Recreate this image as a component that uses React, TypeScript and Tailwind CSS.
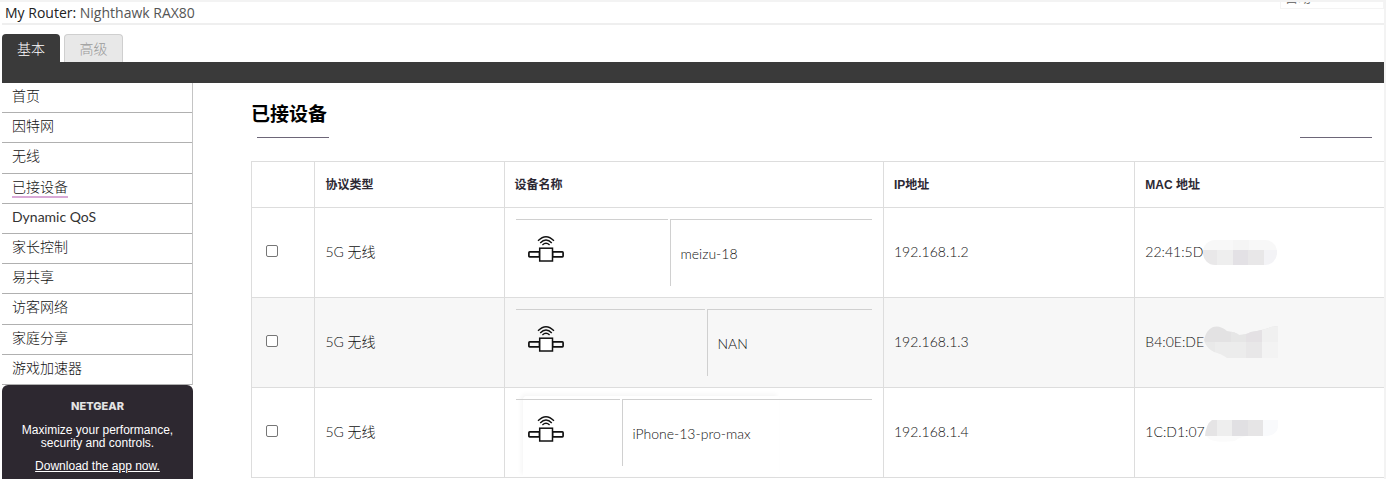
import React from "react";

const navItems: string[] = [
  "首页",
  "因特网",
  "无线",
  "已接设备",
  "Dynamic QoS",
  "家长控制",
  "易共享",
  "访客网络",
  "家庭分享",
  "游戏加速器",
];

type MaskShape = "pill" | "wave" | "flat";

interface Device {
  protocol: string;
  name: string;
  iconCell: string;
  ip: string;
  mac: string;
  mask: MaskShape;
  raised?: boolean;
}

const devices: Device[] = [
  { protocol: "5G 无线", name: "meizu-18", iconCell: "w-[152px]", ip: "192.168.1.2", mac: "22:41:5D", mask: "pill" },
  { protocol: "5G 无线", name: "NAN", iconCell: "w-[189px]", ip: "192.168.1.3", mac: "B4:0E:DE", mask: "wave" },
  {
    protocol: "5G 无线",
    name: "iPhone-13-pro-max",
    iconCell: "w-[104px]",
    ip: "192.168.1.4",
    mac: "1C:D1:07",
    mask: "flat",
    raised: true,
  },
];

function DeviceIcon() {
  return (
    <svg width="36" height="28" viewBox="0 0 36 28" fill="none" stroke="#111" aria-hidden="true">
      <path d="M10 4.8 Q18 -3.2 26 4.8" strokeWidth="1.3" />
      <path d="M12.2 7 Q18 1 23.8 7" strokeWidth="1.3" />
      <path d="M14.4 9 Q18 5.6 21.6 9" strokeWidth="1.3" />
      <rect x="0.9" y="15.9" width="10.6" height="5" rx="0.8" strokeWidth="1.7" />
      <rect x="24.5" y="15.9" width="10.6" height="5" rx="0.8" strokeWidth="1.7" />
      <rect x="11.7" y="12.2" width="12.8" height="12.8" fill="#fff" strokeWidth="1.5" />
    </svg>
  );
}

function Mask({ shape }: { shape: MaskShape }) {
  if (shape === "pill") {
    return (
      <svg width="74" height="32" viewBox="0 0 74 32" aria-hidden="true">
        <clipPath id="mask-pill">
          <rect x="0" y="4" width="74" height="25" rx="12" />
        </clipPath>
        <g clipPath="url(#mask-pill)">
          <rect width="74" height="14" fill="#f8f8f8" />
          <rect x="30" width="16" height="14" fill="#f5f5f5" />
          <rect y="14" width="14" height="16" fill="#e9e8e9" />
          <rect x="14" y="14" width="16" height="16" fill="#eeeeee" />
          <rect x="30" y="14" width="15" height="16" fill="#e3e1e5" />
          <rect x="45" y="14" width="16" height="16" fill="#e8e7e8" />
          <rect x="61" y="14" width="14" height="16" fill="#f3f3f6" />
        </g>
      </svg>
    );
  }
  if (shape === "wave") {
    return (
      <svg width="74" height="32" viewBox="0 0 74 32" aria-hidden="true">
        <clipPath id="mask-wave">
          <path d="M0 14 Q2 4 9 1 Q16 -1 23 5 Q32 6 35 9 Q42 9 47 6 Q60 4 67 1 L74 0 V32 H23 Q18 28 10 26 Q2 22 0 14Z" />
        </clipPath>
        <g clipPath="url(#mask-wave)">
          <rect width="74" height="16" fill="#e3e2e3" />
          <rect x="27" width="15" height="16" fill="#e6e6e6" />
          <rect x="42" width="16" height="16" fill="#e4e1e4" />
          <rect x="58" width="16" height="16" fill="#f0f0f0" />
          <rect y="16" width="11" height="16" fill="#e9e9e9" />
          <rect x="11" y="16" width="31" height="16" fill="#ececec" />
          <rect x="42" y="16" width="16" height="16" fill="#e8e7e8" />
          <rect x="58" y="16" width="16" height="16" fill="#f3f3f3" />
        </g>
      </svg>
    );
  }
  return (
    <svg width="74" height="26" viewBox="0 0 74 26" aria-hidden="true">
      <path d="M1 17 H42 Q34 18 30 22 Q14 24 6 21Z" fill="#fbfbfb" />
      <path d="M0 17 Q1 5 7 1 H12 V17Z" fill="#e5e4e5" />
      <rect x="12" y="1" width="15" height="16" fill="#eeeeee" />
      <rect x="27" y="1" width="16" height="16" fill="#e1e0e3" />
      <rect x="43" y="1" width="15" height="16" fill="#e6e5e6" />
      <path d="M58 1 H73 V8 Q72 16 62 17 H58Z" fill="#f9fafc" />
    </svg>
  );
}

function Header() {
  return (
    <header className="flex h-[23px] items-center justify-between overflow-hidden border-b-2 border-[#efefef]">
      <p className="pl-[3px] font-['Open_Sans','Noto_Sans',sans-serif] text-[14px] leading-5 text-[#555]">
        <span className="text-[#222]">My Router:</span> Nighthawk RAX80
      </p>
      <select
        aria-label="语言"
        className="mb-8 h-6 w-[104px] shrink-0 appearance-none border border-[#f4f4f4] bg-white px-1 text-[13px] leading-5 text-[#777]"
      >
        <option>自动</option>
      </select>
    </header>
  );
}

function Tabs() {
  return (
    <div className="pt-[9px]">
      <div className="flex gap-1">
        <button className="h-7 w-[58px] rounded-t bg-[#3a3a3a] text-[14px] font-light text-white">基本</button>
        <button className="h-7 w-[59px] rounded-t border border-b-0 border-[#cfcfcf] bg-[#e8e8e8] text-[14px] font-light text-[#999]">
          高级
        </button>
      </div>
      <div className="h-[21px] bg-[#3a3a3a]" />
    </div>
  );
}

function Sidebar() {
  return (
    <aside className="flex w-[191px] shrink-0 flex-col">
      <nav className="border-r border-[#c4c4c4]">
        <ul className="grid h-[302px] auto-rows-fr">
          {navItems.map((item) => (
            <li key={item} className="flex items-center border-b border-[#b0b0b0] pb-[3px] pl-2.5">
              <a
                href="#"
                className={
                  item === "已接设备"
                    ? "border-b-2 border-[#d9a9d6] pt-0.5 text-[14px] leading-[18px] font-light text-[#111]"
                    : item === "Dynamic QoS"
                      ? "text-[14px] leading-5 text-[#333]"
                      : "text-[14px] leading-5 font-light text-[#111]"
                }
              >
                {item}
              </a>
            </li>
          ))}
        </ul>
      </nav>
      <div className="grow rounded-t-md bg-[#2d2830] px-2 pt-[15px] text-center font-['Liberation_Sans',Arial,sans-serif] text-[12px] leading-[13px] text-white">
        <p className="font-[Inter,sans-serif] text-[11px] leading-3 font-extrabold text-[#e4e4e4]">NETGEAR</p>
        <p className="pt-3">
          Maximize your performance,
          <br />
          security and controls.
        </p>
        <p className="pt-2.5">
          <a href="#" className="underline">
            Download the app now.
          </a>
        </p>
      </div>
    </aside>
  );
}

function DeviceTable() {
  const head = "border border-[#dddddd] px-2.5 text-left text-[12px] font-bold text-[#2c2833]";
  const cell = "border border-[#dddddd] px-2.5 pb-0.5 text-[14px] font-light text-[#111]";
  return (
    <table className="w-full table-fixed border-collapse">
      <thead>
        <tr className="h-[46px]">
          <th className={head + " w-[5.6%]"} aria-label="选择" />
          <th className={head + " w-[16.7%]"}>协议类型</th>
          <th className={head + " w-[33.5%]"}>设备名称</th>
          <th className={head + " w-[22.2%] font-['Liberation_Sans','Noto_Sans_CJK_SC',sans-serif]"}>IP地址</th>
          <th className={head + " border-r-0 font-['Liberation_Sans','Noto_Sans_CJK_SC',sans-serif]"}>MAC 地址</th>
        </tr>
      </thead>
      <tbody>
        {devices.map((device) => (
          <tr key={device.name} className="h-[90px] even:bg-[#f7f7f7]">
            <td className="border border-[#dddddd] pb-1 pl-3.5">
              <input
                type="checkbox"
                aria-label={device.name}
                className="block size-3 appearance-none rounded-xs border border-[#767676] bg-white"
              />
            </td>
            <td className={cell}>{device.protocol}</td>
            <td className="relative border border-[#dddddd] px-[11px] text-[14px] font-light text-[#111]">
              {device.raised && (
                <div className="absolute top-2 left-[18px] h-20 w-64 rounded-tl shadow-[-2px_-2px_4px_rgba(0,0,0,0.04)]" />
              )}
              <div className="relative flex h-[67px] gap-0.5">
                <div className={"shrink-0 border-t border-[#d0d0d0] pt-4 pl-3 " + device.iconCell}>
                  <DeviceIcon />
                </div>
                <div className="flex grow items-center border-t border-l border-[#d0d0d0] pl-2.5">{device.name}</div>
              </div>
            </td>
            <td className={cell}>{device.ip}</td>
            <td className="border border-r-0 border-[#dddddd] pb-0.5 pl-2.5 text-[14px] font-light text-[#111]">
              <div className="flex items-center">
                <span>{device.mac}</span>
                <Mask shape={device.mask} />
              </div>
            </td>
          </tr>
        ))}
      </tbody>
    </table>
  );
}

export default function App() {
  return (
    <div className="flex min-h-screen flex-col border-t-2 border-r-2 border-[#f3f3f3] bg-white pl-0.5 font-[Lato,'Noto_Sans_CJK_SC',sans-serif]">
      <Header />
      <Tabs />
      <div className="flex grow">
        <Sidebar />
        <main className="min-w-0 grow pl-[58px]">
          <h1 className="pt-[15px] text-[19px] leading-8 font-bold text-black">已接设备</h1>
          <div className="flex justify-between pt-[7px] pr-3 pl-1.5">
            <div className="h-px w-[72px] bg-[#6d6678]" />
            <div className="h-px w-[72px] bg-[#6d6678]" />
          </div>
          <div className="pt-[23px]">
            <DeviceTable />
          </div>
        </main>
      </div>
    </div>
  );
}
